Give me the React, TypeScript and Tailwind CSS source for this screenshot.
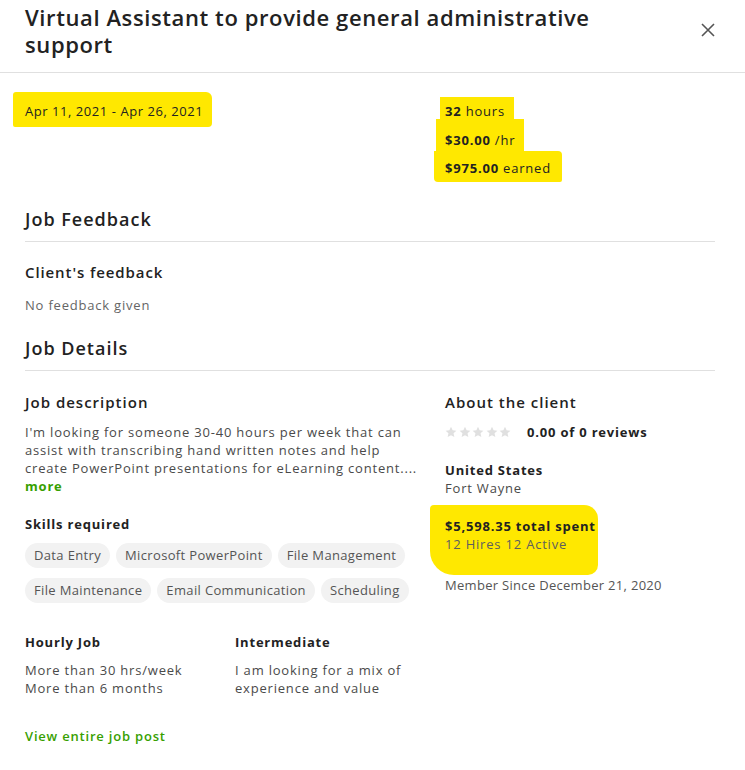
import React from 'react';

// Reusable pieces for the job details modal
const SKILLS_ROW_1 = ['Data Entry', 'Microsoft PowerPoint', 'File Management'];
const SKILLS_ROW_2 = ['File Maintenance', 'Email Communication', 'Scheduling'];

const CloseIcon = () => (
  <svg width="14" height="14" viewBox="0 0 14 14" fill="none" stroke="#555" strokeWidth="1.6">
    <path d="M1 1 L13 13 M13 1 L1 13" />
  </svg>
);

const Star = () => (
  <svg width="12" height="12" viewBox="0 0 24 24" fill="#e0e0e0">
    <path d="M12 1.5l3.2 7.1 7.6.8-5.7 5.2 1.6 7.6L12 18.3l-6.7 3.9 1.6-7.6L1.2 9.4l7.6-.8z" />
  </svg>
);

const Chip = ({ label }: { label: string }) => (
  <span className="inline-flex items-center h-[25px] px-[9px] rounded-full bg-[#f2f2f2] text-[13px] tracking-[0.35px] text-[#555]">
    {label}
  </span>
);

const App: React.FC = () => {
  return (
    <div className="w-[745px] min-h-[770px] bg-white text-[#222] font-['Open_Sans',sans-serif] tracking-[0.8px]">
      <header className="flex items-start justify-between pl-[25px] pr-[30px] pt-[4px] pb-[14px] border-b border-[#e0e0e0]">
        <h1 className="w-[620px] text-[22px] leading-[27px] font-semibold text-[#222] tracking-[0.6px]">
          Virtual Assistant to provide general administrative support
        </h1>
        <div className="mt-[19px]">
          <CloseIcon />
        </div>
      </header>

      <div className="pl-[25px] pr-[30px]">
        {/* Contract dates and earnings */}
        <div className="grid grid-cols-[420px_1fr] items-start pt-[19px]">
          <div>
            <div className="inline-block -ml-[12px] pl-[12px] pr-[9px] pt-[7px] pb-[4px] leading-[24px] text-[13px] tracking-[0.55px] bg-[#ffe800] rounded-[3px_6px_4px_2px]">
              Apr 11, 2021 - Apr 26, 2021
            </div>
          </div>
          <div className="mt-[5px] text-[13px]">
            <div className="-ml-[5px] pl-[5px] w-[74px] h-[22px] pt-[3px] leading-[22px] bg-[#ffe800] whitespace-nowrap">
              <b>32</b> hours
            </div>
            <div className="-ml-[9px] pl-[9px] w-[88px] h-[32px] pt-[10px] leading-[22px] bg-[#ffe800] whitespace-nowrap">
              <b>$30.00</b> /hr
            </div>
            <div className="-ml-[11px] pl-[11px] w-[128px] h-[31px] pt-[6px] leading-[22px] bg-[#ffe800] whitespace-nowrap rounded-[0_4px_2px_4px]">
              <b>$975.00</b> earned
            </div>
          </div>
        </div>

        {/* Feedback */}
        <h2 className="mt-[25px] pb-[10px] text-[18px] leading-[24px] font-semibold tracking-[1px] border-b border-[#e0e0e0]">
          Job Feedback
        </h2>
        <h3 className="mt-[20px] text-[15px] leading-[20px] font-semibold tracking-[0.9px]">Client's feedback</h3>
        <p className="mt-[13px] text-[13px] leading-[20px] text-[#656565]">No feedback given</p>

        {/* Details */}
        <h2 className="mt-[21px] pb-[10px] text-[18px] leading-[24px] font-semibold tracking-[1px] border-b border-[#e0e0e0]">
          Job Details
        </h2>

        <div className="grid grid-cols-[420px_1fr] pt-[21px]">
          <div>
            <h3 className="text-[15px] leading-[20px] font-semibold tracking-[1px]">Job description</h3>
            <p className="mt-[11px] w-[395px] text-[13px] leading-[18px] text-[#4a4a4a]">
              I'm looking for someone 30-40 hours per week that can assist with transcribing hand written notes and help
              create PowerPoint presentations for eLearning content....
            </p>
            <a className="block text-[13px] leading-[18px] font-bold text-[#37a000]">more</a>

            <h4 className="mt-[20px] text-[13px] leading-[18px] font-bold">Skills required</h4>
            <div className="mt-[10px] flex gap-[6px]">
              {SKILLS_ROW_1.map(s => <Chip key={s} label={s} />)}
            </div>
            <div className="mt-[10px] flex gap-[6px]">
              {SKILLS_ROW_2.map(s => <Chip key={s} label={s} />)}
            </div>

            <div className="mt-[30px] grid grid-cols-[210px_1fr] text-[13px] leading-[18px]">
              <div>
                <div className="font-bold">Hourly Job</div>
                <div className="mt-[10px] text-[#4a4a4a]">More than 30 hrs/week</div>
                <div className="text-[#4a4a4a]">More than 6 months</div>
              </div>
              <div>
                <div className="font-bold">Intermediate</div>
                <div className="mt-[10px] text-[#4a4a4a]">I am looking for a mix of</div>
                <div className="text-[#4a4a4a]">experience and value</div>
              </div>
            </div>

            <a className="block mt-[30px] text-[13px] leading-[18px] font-semibold text-[#37a000]">View entire job post</a>
          </div>

          <div className="text-[13px] leading-[18px]">
            <h3 className="text-[15px] leading-[20px] font-semibold tracking-[1px]">About the client</h3>
            <div className="mt-[11px] flex items-center">
              <div className="flex gap-[1.5px]">
                {[0, 1, 2, 3, 4].map(i => <Star key={i} />)}
              </div>
              <span className="ml-[16px] font-bold">0.00 of 0 reviews</span>
            </div>
            <div className="mt-[20px] font-bold">United States</div>
            <div className="text-[#4a4a4a]">Fort Wayne</div>
            <div className="mt-[8px] -ml-[15px] pl-[15px] pt-[12px] pb-[21px] w-[168px] bg-[#ffe800] rounded-[4px_14px_10px_24px]">
              <div className="font-bold whitespace-nowrap">$5,598.35 total spent</div>
              <div className="text-[#5e5e5e] leading-[19px]">12 Hires 12 Active</div>
            </div>
            <div className="mt-[1px] text-[#555] tracking-[0.3px]">Member Since December 21, 2020</div>
          </div>
        </div>
      </div>
    </div>
  );
};

export default App;
